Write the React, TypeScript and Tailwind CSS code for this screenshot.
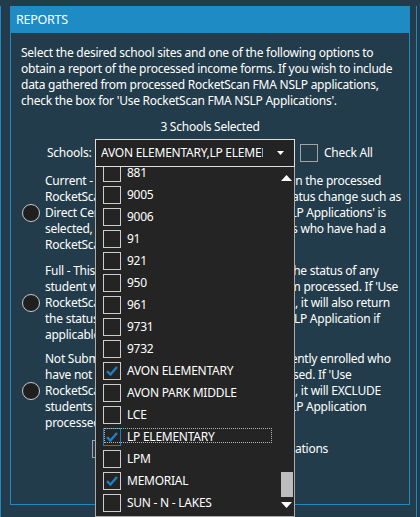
import React from "react";

const schools = [
  { name: "881", checked: false },
  { name: "9005", checked: false },
  { name: "9006", checked: false },
  { name: "91", checked: false },
  { name: "921", checked: false },
  { name: "950", checked: false },
  { name: "961", checked: false },
  { name: "9731", checked: false },
  { name: "9732", checked: false },
  { name: "AVON ELEMENTARY", checked: true },
  { name: "AVON PARK MIDDLE", checked: false },
  { name: "LCE", checked: false },
  { name: "LP ELEMENTARY", checked: true, focused: true },
  { name: "LPM", checked: false },
  { name: "MEMORIAL", checked: true },
  { name: "SUN - N - LAKES", checked: false },
];

const options = [
  {
    lines: [
      "Current - This will return all students included in the processed",
      "RocketScan FMA income forms which had a status change such as",
      "Direct Certification if 'Use RocketScan FMA NSLP Applications' is",
      "selected, it will also return each of the students who have had a",
      "RocketScan FMA NSLP Application processed.",
    ],
    gap: "mt-[6px]",
  },
  {
    lines: [
      "Full - This report will return each student and the status of any",
      "student who has had a household income form processed. If 'Use",
      "RocketScan FMA NSLP Applications' is selected, it will also return",
      "the status of student via a RocketScan FMA NSLP Application if",
      "applicable.",
    ],
    gap: "mt-[10px]",
  },
  {
    lines: [
      "Not Submitted - This will return students, currently enrolled who",
      "have not had household income forms processed. If 'Use",
      "RocketScan FMA NSLP Applications' is selected, it will EXCLUDE",
      "students who have had a RocketScan FMA NSLP Application",
      "processed.",
    ],
    gap: "mt-[8px]",
  },
];

function Check() {
  return (
    <svg width="18" height="18" viewBox="0 0 18 18" className="absolute -left-px -top-px">
      <path d="M4 9.2 L7.4 12.6 L14 5" fill="none" stroke="#1e80c3" strokeWidth="2.4" />
    </svg>
  );
}

function Box({ checked, focus }: { checked?: boolean; focus?: boolean }) {
  return (
    <div
      className={`relative w-[18px] h-[18px] shrink-0 border ${focus ? "border-[#1e80c3]" : "border-[#cdcdcd]"}`}
    >
      {checked && <Check />}
    </div>
  );
}

function SchoolList() {
  return (
    <div className="absolute left-0 top-[28px] w-[200px] h-[350px] bg-[#242424] border-x border-b border-[#ababab] flex overflow-hidden">
      <div className="flex-1 -mt-[5px]">
        {schools.map((s) => (
          <div key={s.name} className="relative h-[22px] flex items-center pl-[7px] gap-[6px]">
            <Box checked={s.checked} focus={s.focused} />
            <span className="text-white whitespace-nowrap">{s.name}</span>
            {s.focused && (
              <div className="absolute left-[8px] top-[2px] w-[168px] h-[15px] border border-dotted border-[#b5b5b5]" />
            )}
          </div>
        ))}
      </div>
      <div className="w-[15px] flex flex-col items-center">
        <svg width="11" height="6" viewBox="0 0 11 6" className="mt-[8px]">
          <path d="M0 6 L5.5 0 L11 6 Z" fill="#ffffff" />
        </svg>
        <div className="flex-1" />
        <div className="w-[12px] h-[25px] bg-[#bdbdbd]" />
        <svg width="11" height="6" viewBox="0 0 11 6" className="mt-[5px] mb-[8px]">
          <path d="M0 0 L11 0 L5.5 6 Z" fill="#ffffff" />
        </svg>
      </div>
    </div>
  );
}

export default function App() {
  return (
    <div className="w-[420px] h-[517px] bg-[#233c4b] overflow-hidden font-['Noto_Sans',sans-serif] text-[12px] leading-[16px] tracking-[-0.25px] text-white">
      <div className="w-[417px] h-full border-x border-[#1f8ac4]">
        <div className="ml-[9px] mt-[6px] w-[400px]">
          <div className="h-[27px] bg-[#1f8bc4] pl-[6px] flex items-center text-[12.5px]">REPORTS</div>
          <div className="h-[472px] border-x border-b border-[#1f8ac4] pt-[12px] px-[10px]">
            <p className="whitespace-nowrap">
              Select the desired school sites and one of the following options to
              <br />
              obtain a report of the processed income forms. If you wish to include
              <br />
              data gathered from processed RocketScan FMA NSLP applications,
              <br />
              check the box for 'Use RocketScan FMA NSLP Applications'.
            </p>
            <p className="mt-[10px] text-center">3 Schools Selected</p>

            <div className="mt-[4px] flex items-center h-[28px] pl-[26px]">
              <span className="w-[48px]">Schools:</span>
              <div className="relative z-10">
                <div className="w-[200px] h-[28px] bg-[#232323] border border-[#dedede] flex items-center pl-[5px] pr-[10px]">
                  <span className="w-[162px] overflow-hidden whitespace-nowrap">
                    AVON ELEMENTARY,LP ELEMENTARY,MEMORIAL
                  </span>
                  <svg width="7" height="4" viewBox="0 0 7 4" className="ml-auto">
                    <path d="M0 0 L7 0 L3.5 4 Z" fill="#ffffff" />
                  </svg>
                </div>
                <SchoolList />
              </div>
              <div className="ml-[5px] w-[18px] h-[18px] border border-[#a3a3a3]" />
              <span className="ml-[6px]">Check All</span>
            </div>

            {options.map((o, i) => (
              <div key={i} className={`${o.gap} flex items-center`}>
                <div className="ml-[1px] w-[18px] h-[18px] rounded-full border border-[#c8c8c8] bg-[#1f1f1f] shrink-0" />
                <div className="ml-[5px] whitespace-nowrap">
                  {o.lines.map((l) => (
                    <div key={l}>{l}</div>
                  ))}
                </div>
              </div>
            ))}

            <div className="mt-[9px] flex items-center justify-center gap-[6px]">
              <div className="w-[18px] h-[18px] border border-[#a3a3a3]" />
              <span>Use RocketScan FMA NSLP Applications</span>
            </div>
          </div>
        </div>
      </div>
    </div>
  );
}
